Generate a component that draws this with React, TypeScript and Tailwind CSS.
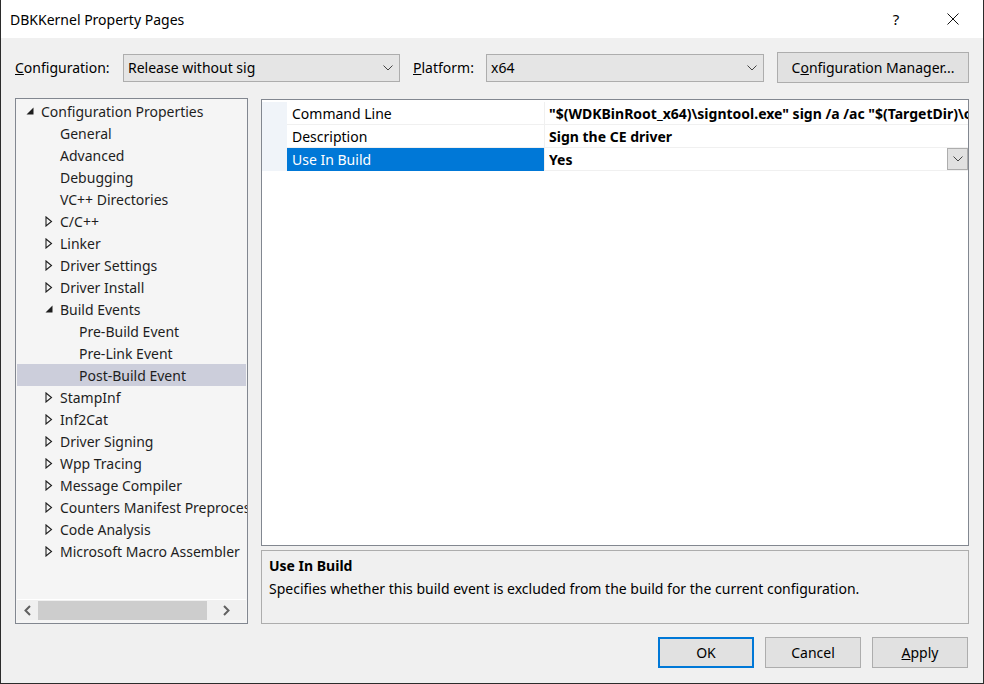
import React from "react";

type Node = { label: string; level: number; arrow?: "open" | "closed"; selected?: boolean };

const tree: Node[] = [
  { label: "Configuration Properties", level: 0, arrow: "open" },
  { label: "General", level: 1 },
  { label: "Advanced", level: 1 },
  { label: "Debugging", level: 1 },
  { label: "VC++ Directories", level: 1 },
  { label: "C/C++", level: 1, arrow: "closed" },
  { label: "Linker", level: 1, arrow: "closed" },
  { label: "Driver Settings", level: 1, arrow: "closed" },
  { label: "Driver Install", level: 1, arrow: "closed" },
  { label: "Build Events", level: 1, arrow: "open" },
  { label: "Pre-Build Event", level: 2 },
  { label: "Pre-Link Event", level: 2 },
  { label: "Post-Build Event", level: 2, selected: true },
  { label: "StampInf", level: 1, arrow: "closed" },
  { label: "Inf2Cat", level: 1, arrow: "closed" },
  { label: "Driver Signing", level: 1, arrow: "closed" },
  { label: "Wpp Tracing", level: 1, arrow: "closed" },
  { label: "Message Compiler", level: 1, arrow: "closed" },
  { label: "Counters Manifest Preprocessor", level: 1, arrow: "closed" },
  { label: "Code Analysis", level: 1, arrow: "closed" },
  { label: "Microsoft Macro Assembler", level: 1, arrow: "closed" },
];

const props = [
  { name: "Command Line", value: "\"$(WDKBinRoot_x64)\\signtool.exe\" sign /a /ac \"$(TargetDir)\\cert.cer\" /fd sha256" },
  { name: "Description", value: "Sign the CE driver" },
  { name: "Use In Build", value: "Yes", selected: true },
];

function Chevron() {
  return (
    <svg width="10" height="6" viewBox="0 0 10 6">
      <polyline points="0.5,0.5 5,5 9.5,0.5" fill="none" stroke="#444" strokeWidth="1" />
    </svg>
  );
}

function Arrow({ kind }: { kind: "open" | "closed" }) {
  if (kind === "open") {
    return (
      <svg width="8" height="8" viewBox="0 0 8 8">
        <polygon points="7.5,0.5 7.5,7.5 0.5,7.5" fill="#1e1e1e" />
      </svg>
    );
  }
  return (
    <svg width="8" height="11" viewBox="0 0 8 11">
      <polygon points="1,1 6.5,5.5 1,10" fill="none" stroke="#1e1e1e" strokeWidth="1.1" />
    </svg>
  );
}

function Combo({ value, width }: { value: string; width: string }) {
  return (
    <div className={`${width} h-[28px] bg-[#e5e5e5] border border-[#adadad] flex items-center justify-between pl-[4px] pr-[6px]`}>
      <span>{value}</span>
      <Chevron />
    </div>
  );
}

function Button({ children, primary }: { children: React.ReactNode; primary?: boolean }) {
  return (
    <div
      className={`w-[96px] h-[31px] bg-[#e1e1e1] flex items-center justify-center ${
        primary ? "border-2 border-[#0078d7]" : "border border-[#adadad]"
      }`}
    >
      {children}
    </div>
  );
}

export default function App() {
  return (
    <div
      className="w-[984px] h-[684px] flex flex-col border-x border-b border-[#2b2b2b] text-[14px] text-black overflow-hidden"
      style={{ fontFamily: '"Noto Sans", "Open Sans", sans-serif' }}
    >
      {/* Title bar */}
      <div className="h-[38px] bg-white flex items-center pl-[9px] shrink-0">
        <span className="flex-1">DBKKernel Property Pages</span>
        <span className="w-[62px] text-center text-[15px]">?</span>
        <div className="w-[56px] flex justify-center pr-[4px]">
          <svg width="12" height="12" viewBox="0 0 12 12">
            <path d="M0.5,0.5 L11.5,11.5 M11.5,0.5 L0.5,11.5" stroke="#111" strokeWidth="1" />
          </svg>
        </div>
      </div>

      <div className="flex-1 bg-[#f0f0f0] px-[14px] flex flex-col">
        {/* Config row */}
        <div className="flex items-center mt-[14px] h-[31px]">
          <span className="w-[108px]">
            <span className="underline">C</span>onfiguration:
          </span>
          <Combo value="Release without sig" width="w-[277px]" />
          <span className="ml-[13px] w-[73px]">
            <span className="underline">P</span>latform:
          </span>
          <Combo value="x64" width="w-[278px]" />
          <div className="ml-[13px] w-[192px] h-[31px] bg-[#e1e1e1] border border-[#adadad] flex items-center justify-center">
            C<span className="underline">o</span>nfiguration Manager...
          </div>
        </div>

        {/* Main */}
        <div className="flex gap-[13px] mt-[15px] h-[526px]">
          {/* Tree */}
          <div className="w-[233px] shrink-0 border border-[#828790] bg-[#f5f5f5] flex flex-col text-[#1e1e1e]">
            <div className="flex-1 pt-[1px] px-[1px] overflow-hidden">
              {tree.map((n) => (
                <div
                  key={n.label}
                  className={`h-[22px] flex items-center whitespace-nowrap ${n.selected ? "bg-[#cccedb]" : ""}`}
                >
                  <div
                    className={`flex items-center justify-center w-[10px] shrink-0 ${
                      n.level === 0 ? "ml-[8px]" : n.level === 1 ? "ml-[27px]" : "ml-[46px]"
                    }`}
                  >
                    {n.arrow ? <Arrow kind={n.arrow} /> : null}
                  </div>
                  <span className="ml-[6px]">{n.label}</span>
                </div>
              ))}
            </div>
            <div className="h-[1px] bg-white mx-[1px]" />
            <div className="h-[20px] mx-[1px] mb-[3px] bg-[#f0f0f0] flex items-center">
              <div className="w-[21px] flex justify-center">
                <svg width="7" height="11" viewBox="0 0 7 11">
                  <polyline points="6,1 1.5,5.5 6,10" fill="none" stroke="#606060" strokeWidth="2" />
                </svg>
              </div>
              <div className="w-[169px] h-[19px] bg-[#cdcdcd]" />
              <div className="flex-1 flex justify-center">
                <svg width="7" height="11" viewBox="0 0 7 11">
                  <polyline points="1,1 5.5,5.5 1,10" fill="none" stroke="#606060" strokeWidth="2" />
                </svg>
              </div>
            </div>
          </div>

          {/* Right side */}
          <div className="flex-1 min-w-0 flex flex-col pt-[1px]">
            <div className="h-[448px] border border-[#828790] bg-white pt-[2px] overflow-hidden">
              {props.map((p) => (
                <div key={p.name} className="flex h-[23px]">
                  <div className="w-[25px] bg-[#f0f4f9] shrink-0" />
                  <div
                    className={`w-[258px] shrink-0 flex items-center pl-[5px] border-r border-[#f0f0f0] ${
                      p.selected ? "bg-[#0078d7] text-white" : "border-b"
                    }`}
                  >
                    {p.name}
                  </div>
                  <div className="flex-1 min-w-0 flex items-center pl-[4px] font-bold whitespace-nowrap overflow-hidden border-b border-[#f0f0f0]">
                    <span className="flex-1 min-w-0 overflow-hidden">{p.value}</span>
                    {p.selected ? (
                      <div className="w-[21px] h-[22px] shrink-0 bg-[#e1e1e1] border border-[#adadad] flex items-center justify-center">
                        <Chevron />
                      </div>
                    ) : null}
                  </div>
                </div>
              ))}
            </div>
            <div className="mt-[4px] h-[74px] border border-[#adadad] px-[7px] pt-[4px]">
              <div className="font-bold">Use In Build</div>
              <div className="mt-[2px]">Specifies whether this build event is excluded from the build for the current configuration.</div>
            </div>
          </div>
        </div>

        {/* Buttons */}
        <div className="flex justify-end gap-[11px] mt-[13px] pr-[1px]">
          <Button primary>OK</Button>
          <Button>Cancel</Button>
          <Button>
            <span>
              <span className="underline">A</span>pply
            </span>
          </Button>
        </div>
      </div>
    </div>
  );
}
